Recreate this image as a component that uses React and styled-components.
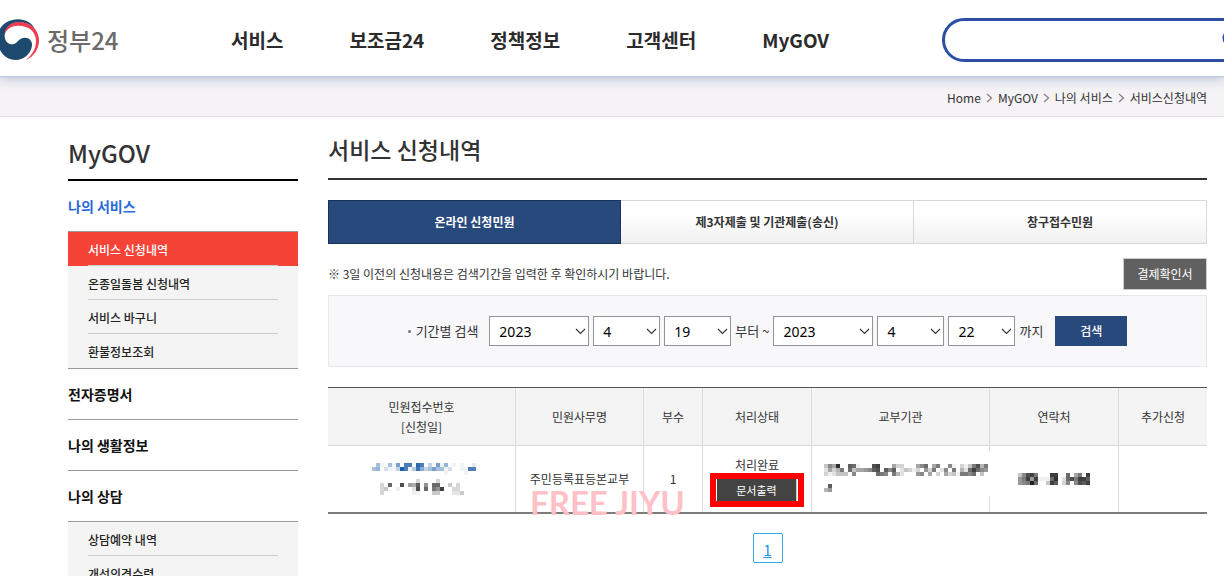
import React from "react";
import styled, { createGlobalStyle, css } from "styled-components";

const GlobalStyle = createGlobalStyle`
  *, *::before, *::after { box-sizing: border-box; }
  html, body { margin: 0; height: 100%; overflow: hidden; }
  body {
    background: #fff;
    color: #333;
    font-family: "Noto Sans CJK KR", "Noto Sans", sans-serif;
    font-size: 12px;
    line-height: 20px;
  }
  a { color: inherit; text-decoration: none; }
  ul, ol { margin: 0; padding: 0; list-style: none; }
  h1, h2, h3, p { margin: 0; }
  button, select, input { font-family: inherit; margin: 0; }
`;

const Header = styled.header`
  position: relative;
  display: flex;
  align-items: center;
  height: 76px;
  overflow: visible;
  background: #fff;
  box-shadow: 0 1px 2px #b9c4dc, 0 3px 12px rgba(90, 115, 170, 0.4);
`;

const Logo = styled.a`
  display: flex;
  flex: none;
  align-items: center;
  gap: 7px;
  width: 231px;
  height: 60px;
  margin-top: 3px;
  color: #6b6b6b;
  font-size: 24px;
  font-weight: 500;
  line-height: 32px;
`;

const Nav = styled.nav`
  display: flex;
  flex: none;
  gap: 66px;
  width: 711px;
  margin-top: 4px;
  color: #2b2b2b;
  font-size: 19px;
  font-weight: 700;
  line-height: 28px;
  white-space: nowrap;
`;

const SearchField = styled.label`
  display: flex;
  flex: 1 0 330px;
  align-items: center;
  height: 44px;
  margin-top: 4px;
  padding: 0 25px 0 22px;
  border: 3px solid #2c4fa3;
  border-radius: 22px;
  background: #fff;
`;

const SearchInput = styled.input`
  flex: 1;
  min-width: 0;
  border: 0;
  outline: 0;
  background: transparent;
  font-size: 16px;
`;

const HeaderClip = styled.div`
  overflow-x: clip;
`;

const BreadcrumbBar = styled.nav`
  height: 41px;
  padding: 12px 17px 0;
  border-bottom: 1px solid #e4e2e4;
  background: #f5f3f5;
`;

const Crumbs = styled.ol`
  display: flex;
  justify-content: flex-end;
  align-items: center;
`;

const Crumb = styled.li`
  display: flex;
  align-items: center;
  svg { margin: 0 5px; }
`;

const Page = styled.div`
  display: flex;
  gap: 30px;
  padding: 0 17px 0 68px;
`;

const Sidebar = styled.aside`
  flex: none;
  width: 230px;
`;

const SideTitle = styled.h2`
  height: 64px;
  padding-top: 19px;
  border-bottom: 2px solid #000;
  font-size: 24px;
  font-weight: 500;
  line-height: 34px;
`;

const GroupLink = styled.a`
  display: block;
  height: 51px;
  padding-top: 14px;
  border-bottom: 1px solid #999;
  color: ${(p) => (p.$active ? "#2a6bdc" : "#111")};
  font-size: 14px;
  font-weight: 700;
  line-height: 22px;
`;

const SubMenu = styled.ul`
  border-bottom: 1px solid #999;
  background: #f4f4f4;
`;

const SubItem = styled.li`
  height: 34px;
  padding: 0 20px;
  background: ${(p) => (p.$active ? "#f54337" : "transparent")};
  color: ${(p) => (p.$active ? "#fff" : "#222")};
  font-weight: 500;
  a {
    display: block;
    height: 34px;
    padding-top: 1px;
    border-bottom: 1px solid #ccc;
    line-height: 34px;
  }
  &:last-child a { border-bottom: 0; }
`;

const Main = styled.main`
  flex: 1;
  min-width: 0;
`;

const Title = styled.h1`
  height: 63px;
  padding-top: 15px;
  border-bottom: 2px solid #333;
  font-size: 23px;
  font-weight: 500;
  line-height: 34px;
`;

const Tabs = styled.div`
  display: grid;
  grid-template-columns: repeat(3, 1fr);
  margin-top: 20px;
`;

const Tab = styled.button`
  height: 44px;
  padding: 0 0 2px;
  border: 1px solid #d8d8d8;
  border-left-width: 0;
  background: linear-gradient(#fff 30%, #f0f0f0);
  color: #333;
  font-size: 12px;
  font-weight: 700;
  ${(p) =>
    p.$active &&
    css`
      border: 1px solid #17335d;
      background: #28497c;
      color: #fff;
    `}
`;

const NoticeRow = styled.div`
  display: flex;
  justify-content: space-between;
  align-items: center;
  margin: 14px 0 5px;
`;

const ReceiptButton = styled.button`
  width: 84px;
  height: 32px;
  padding: 0 0 2px;
  border: 1px solid #ccc;
  background: #606060;
  color: #fff;
  font-size: 12px;
`;

const PeriodForm = styled.form`
  display: flex;
  justify-content: center;
  align-items: center;
  gap: 4px;
  height: 72px;
  border: 1px solid #e7e7ec;
  background: #f8f8fb;
  font-size: 13px;
  white-space: nowrap;
`;

const PeriodLabel = styled.span`
  display: flex;
  align-items: center;
  gap: 5px;
  margin-right: 7px;
  &::before {
    content: "";
    width: 3px;
    height: 3px;
    border-radius: 50%;
    background: #777;
  }
`;

const SelectBox = styled.span`
  position: relative;
  display: block;
  width: ${(p) => (p.$wide ? "100px" : "67px")};
  height: 30px;
  select {
    appearance: none;
    width: 100%;
    height: 100%;
    padding: 0 20px 0 9px;
    border: 1px solid #949494;
    border-radius: 0;
    background: #fff;
    color: #000;
    font-family: "Noto Sans", sans-serif;
    font-size: 14px;
  }
  svg {
    position: absolute;
    top: 12px;
    right: 3px;
    pointer-events: none;
  }
`;

const SubmitButton = styled.button`
  width: 72px;
  height: 30px;
  margin-left: 8px;
  padding: 0 0 2px;
  border: 1px solid #28497c;
  background: #28497c;
  color: #fff;
  font-size: 12px;
  font-weight: 500;
`;

const TableArea = styled.div`
  position: relative;
  margin-top: 20px;
`;

const Table = styled.table`
  width: 100%;
  table-layout: fixed;
  border-collapse: separate;
  border-spacing: 0;
  border-top: 1px solid #555;
  border-bottom: 2px solid #7c7c7c;
  text-align: center;
`;

const cell = css`
  padding: 0;
  border-left: 1px solid #dcdcdc;
  font-weight: 400;
  &:first-child { border-left: 0; }
`;

const HeadCell = styled.th`
  ${cell}
  height: 58px;
  border-bottom: 1px solid #d8d8d8;
  background: #f4f4f4;
`;

const Cell = styled.td`
  ${cell}
  height: 66px;
`;

const ReceiptMask = styled.div`
  padding-left: 5px;
`;

const Masked = styled.svg`
  display: block;
  margin: 0 auto;
`;

const AgencyMask = styled.svg`
  position: absolute;
  z-index: 1;
  top: 5px;
  left: 4px;
`;

const AgencyBox = styled.div`
  position: relative;
  height: 66px;
`;

const PrintFrame = styled.div`
  width: 94px;
  height: 34px;
  margin: -2px auto 0;
  border: 6px solid #f00;
`;

const PrintButton = styled.button`
  display: block;
  width: 80px;
  height: 22px;
  margin: 0 1px;
  padding: 0;
  border: 0;
  border-right: 1px solid #ccc;
  background: #434343;
  color: #fff;
  font-size: 11px;
  line-height: 22px;
`;

const Status = styled.div`
  padding-top: 3px;
`;

const Watermark = styled.span`
  position: absolute;
  top: 95px;
  left: 202px;
  color: #ffc0c8;
  font-family: Lato, sans-serif;
  font-size: 33px;
  font-weight: 700;
  line-height: 40px;
  white-space: nowrap;
  pointer-events: none;
`;

const Pagination = styled.nav`
  display: flex;
  justify-content: center;
  margin-top: 19px;
`;

const PageLink = styled.a`
  width: 30px;
  height: 30px;
  border: 1px solid #35a9ee;
  border-radius: 2px;
  color: #2196e8;
  font-size: 15px;
  line-height: 32px;
  text-align: center;
  text-decoration: underline;
`;

const Emblem = () => (
  <svg width="40" height="45" viewBox="0 50 120 135" aria-hidden="true">
    <path
      fill="#1f4a70"
      d="M-8 112C-6 78 22 57 53 57C78 57 96 69 105 86C90 70 70 64 53 66C30 68 16 84 14 104C13 122 24 133 38 132C52 131 55 112 75 112C90 112 97 124 96 135C94 160 72 179 47 179C15 179 -9 150 -8 112Z"
    />
    <path
      fill="#f23a50"
      d="M14 102C16 79 34 65 57 65C90 65 117 88 117 120C117 148 100 170 78 179C98 162 108 145 108 122C108 95 88 76 55 76C35 76 20 85 14 102Z"
    />
  </svg>
);

const Magnifier = () => (
  <svg width="22" height="22" viewBox="0 0 22 22" fill="none" stroke="#2c4fa3" strokeWidth="3" aria-hidden="true">
    <circle cx="9" cy="9" r="7" />
    <path d="M14 14l6 6" />
  </svg>
);

const CrumbArrow = () => (
  <svg width="7" height="10" viewBox="0 0 7 10" fill="none" stroke="#8a7f86" strokeWidth="1.3" aria-hidden="true">
    <path d="M1 1l4.500 4L1 9" />
  </svg>
);

const Chevron = () => (
  <svg width="11" height="7" viewBox="0 0 11 7" fill="none" stroke="#333" strokeWidth="1.1" aria-hidden="true">
    <path d="M1 1l4.500 4.500L10 1" />
  </svg>
);

/* Every row is a string of hex levels, 0 for blank and f for full ink. */
const Mosaic = ({ rows, ink, x = 0, y = 0 }) =>
  rows.flatMap((row, r) =>
    [...row].map((level, c) =>
      level === "0" ? null : (
        <rect
          key={`${r}-${c}`}
          x={x + c * 4}
          y={y + r * 4}
          width="4"
          height="4"
          fill={ink}
          fillOpacity={parseInt(level, 16) / 15}
        />
      )
    )
  );

const receiptNumber = [
  "06106190cc0ec0409170101002",
  "6703114fc15d84696613001 1cc".replace(" ", ""),
  "00000000000000000010000100",
];
const receiptDate = [
  "000000000300003",
  "30b00d076c080bb00403",
  "340010002d0b0a8e0033",
  "300000001100044000224",
];
const agencyName = [
  "486e00ba1000cd00063300068a069008103149c59",
  "263590a46678bc0b8b024313073902809052ada87",
  "3124440800000a98095200078060306341998a040",
];
const agencyTail = ["0b", "57"];
const contact = ["48cd9000dd00a0690d", "79d7d111ae02ac9ddb", "789fa004db03808cbd"];

const columns = [
  { width: 187, label: <>민원접수번호<br />[신청일]</> },
  { width: 128, label: "민원사무명" },
  { width: 59, label: "부수" },
  { width: 109, label: "처리상태" },
  { width: 178, label: "교부기관" },
  { width: 129, label: "연락처" },
  { width: 89, label: "추가신청" },
];

const menu = [
  {
    label: "나의 서비스",
    active: true,
    items: ["서비스 신청내역", "온종일돌봄 신청내역", "서비스 바구니", "환불정보조회"],
  },
  { label: "전자증명서" },
  { label: "나의 생활정보" },
  { label: "나의 상담", items: ["상담예약 내역", "개선의견수렴"] },
];

const DateSelect = ({ label, value, wide }) => (
  <SelectBox $wide={wide}>
    <select aria-label={label} defaultValue={value}>
      <option>{value}</option>
    </select>
    <Chevron />
  </SelectBox>
);

export default function App() {
  const crumbs = ["Home", "MyGOV", "나의 서비스", "서비스신청내역"];
  return (
    <>
      <GlobalStyle />
      <HeaderClip>
        <Header>
          <Logo href="#">
            <Emblem />
            정부24
          </Logo>
          <Nav>
            {["서비스", "보조금24", "정책정보", "고객센터", "MyGOV"].map((t) => (
              <a href="#" key={t}>{t}</a>
            ))}
          </Nav>
          <SearchField>
            <SearchInput type="text" aria-label="검색어" />
            <Magnifier />
          </SearchField>
        </Header>
      </HeaderClip>
      <BreadcrumbBar>
        <Crumbs>
          {crumbs.map((t, i) => (
            <Crumb key={t}>
              {i > 0 && <CrumbArrow />}
              <a href="#">{t}</a>
            </Crumb>
          ))}
        </Crumbs>
      </BreadcrumbBar>
      <Page>
        <Sidebar>
          <SideTitle>MyGOV</SideTitle>
          {menu.map((group) => (
            <div key={group.label}>
              <GroupLink href="#" $active={group.active}>{group.label}</GroupLink>
              {group.items && (
                <SubMenu>
                  {group.items.map((t, i) => (
                    <SubItem key={t} $active={group.active && i === 0}>
                      <a href="#">{t}</a>
                    </SubItem>
                  ))}
                </SubMenu>
              )}
            </div>
          ))}
        </Sidebar>
        <Main>
          <Title>서비스 신청내역</Title>
          <Tabs>
            <Tab $active>온라인 신청민원</Tab>
            <Tab>제3자제출 및 기관제출(송신)</Tab>
            <Tab>창구접수민원</Tab>
          </Tabs>
          <NoticeRow>
            <p>※ 3일 이전의 신청내용은 검색기간을 입력한 후 확인하시기 바랍니다.</p>
            <ReceiptButton>결제확인서</ReceiptButton>
          </NoticeRow>
          <PeriodForm onSubmit={(e) => e.preventDefault()}>
            <PeriodLabel>기간별 검색</PeriodLabel>
            <DateSelect wide label="시작 연도" value="2023" />
            <DateSelect label="시작 월" value="4" />
            <DateSelect label="시작 일" value="19" />
            <span>부터 ~</span>
            <DateSelect wide label="종료 연도" value="2023" />
            <DateSelect label="종료 월" value="4" />
            <DateSelect label="종료 일" value="22" />
            <span>까지</span>
            <SubmitButton type="submit">검색</SubmitButton>
          </PeriodForm>
          <TableArea>
            <Table>
              <colgroup>
                {columns.map((c) => (
                  <col key={c.width} style={{ width: `${(c.width / 879) * 100}%` }} />
                ))}
              </colgroup>
              <thead>
                <tr>
                  {columns.map((c) => (
                    <HeadCell scope="col" key={c.width}>{c.label}</HeadCell>
                  ))}
                </tr>
              </thead>
              <tbody>
                <tr>
                  <Cell>
                    <ReceiptMask>
                      <Masked width="104" height="32" viewBox="0 0 104 32" shapeRendering="crispEdges">
                        <Mosaic rows={receiptNumber} ink="#1f5ea8" />
                        <Mosaic rows={receiptDate} ink="#333" x={8} y={16} />
                      </Masked>
                    </ReceiptMask>
                  </Cell>
                  <Cell>주민등록표등본교부</Cell>
                  <Cell>1</Cell>
                  <Cell>
                    <Status>처리완료</Status>
                    <PrintFrame>
                      <PrintButton>문서출력</PrintButton>
                    </PrintFrame>
                  </Cell>
                  <Cell>
                    <AgencyBox>
                      <AgencyMask width="174" height="45" viewBox="0 0 174 45" shapeRendering="crispEdges">
                        <rect width="174" height="45" fill="#fff" />
                        <Mosaic rows={agencyName} ink="#222" x={8} y={13} />
                        <Mosaic rows={agencyTail} ink="#222" x={8} y={33} />
                      </AgencyMask>
                    </AgencyBox>
                  </Cell>
                  <Cell>
                    <Masked width="72" height="12" viewBox="0 0 72 12" shapeRendering="crispEdges">
                      <Mosaic rows={contact} ink="#222" />
                    </Masked>
                  </Cell>
                  <Cell />
                </tr>
              </tbody>
            </Table>
            <Watermark>FREE JIYU</Watermark>
          </TableArea>
          <Pagination>
            <PageLink href="#">1</PageLink>
          </Pagination>
        </Main>
      </Page>
    </>
  );
}
